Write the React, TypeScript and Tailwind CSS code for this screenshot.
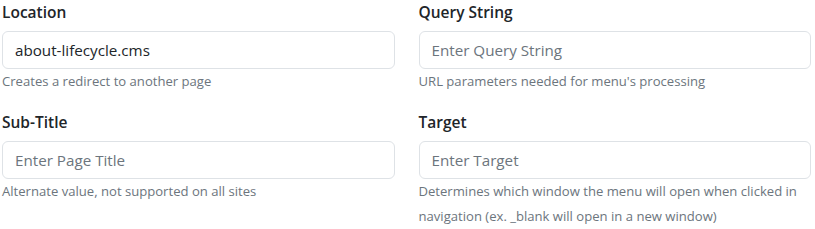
const fields = [
  {
    label: 'Location',
    value: 'about-lifecycle.cms',
    placeholder: 'Enter Location',
    help: 'Creates a redirect to another page'
  },
  {
    label: 'Query String',
    value: '',
    placeholder: 'Enter Query String',
    help: "URL parameters needed for menu's processing"
  },
  {
    label: 'Sub-Title',
    value: '',
    placeholder: 'Enter Page Title',
    help: 'Alternate value, not supported on all sites'
  },
  {
    label: 'Target',
    value: '',
    placeholder: 'Enter Target',
    help: 'Determines which window the menu will open when clicked in navigation (ex. _blank will open in a new window)'
  }
];

export default function App() {
  return (
    <div className="w-[815px] h-[229px] bg-white pl-[2px] pr-[4px] font-['Open_Sans',sans-serif] text-[#212529]">
      <div className="grid grid-cols-2 gap-x-6 gap-y-4">
        {fields.map((f) => (
          <div key={f.label}>
            <label className="block text-[15.5px] leading-6 font-semibold mb-[7px]">{f.label}</label>
            <input
              type="text"
              defaultValue={f.value}
              placeholder={f.placeholder}
              className="block w-full h-[38px] pl-[12px] pr-3 text-[15.2px] border border-[#dee2e6] rounded-md bg-white text-[#212529] placeholder:text-[#6c757d] outline-none"
            />
            <p className="text-[13.1px] leading-[25px] text-[#6c757d]">{f.help}</p>
          </div>
        ))}
      </div>
    </div>
  );
}
